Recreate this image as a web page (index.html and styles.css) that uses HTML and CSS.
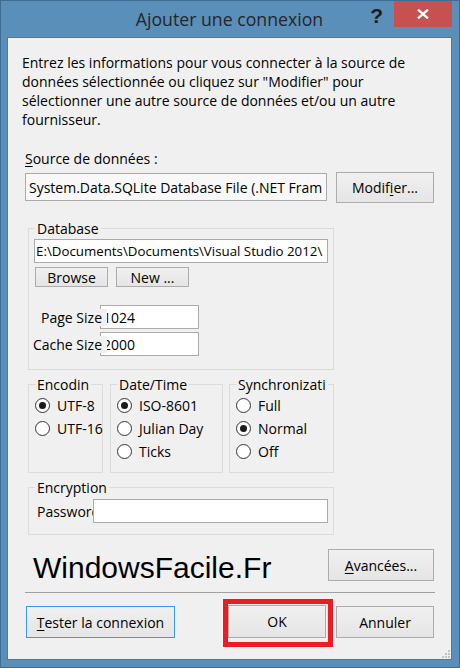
FILE: index.html
```html
<!DOCTYPE html>
<html lang="fr">
<head>
<meta charset="utf-8">
<title>Ajouter une connexion</title>
<link rel="stylesheet" href="styles.css">
</head>
<body>
<div class="window">
  <div class="titlebar">
    <div class="title">Ajouter une connexion</div>
    <div class="caption-buttons">
      <span class="help">?</span>
      <span class="close"><svg width="12" height="10" viewBox="0 0 12 10"><path d="M1 0.6 L11 9.4 M11 0.6 L1 9.4" stroke="#fff" stroke-width="2.3" fill="none"/></svg></span>
    </div>
  </div>
  <div class="client">
    <p class="intro">Entrez les informations pour vous connecter à la source de<br>données sélectionnée ou cliquez sur "Modifier" pour<br>sélectionner une autre source de données et/ou un autre<br>fournisseur.</p>
    <div class="source-label"><u>S</u>ource de données :</div>
    <div class="source-row">
      <div class="textbox readonly source-box">System.Data.SQLite Database File (.NET Fram</div>
      <div class="button modify">Modif<u>i</u>er...</div>
    </div>

    <fieldset class="group db">
      <legend>Database</legend>
      <div class="textbox path">E:\Documents\Documents\Visual Studio 2012\</div>
      <div class="db-buttons">
        <div class="button small">Browse</div>
        <div class="button small">New ...</div>
      </div>
      <div class="kv page"><span class="kv-label">Page Size</span><div class="textbox kv-box">1024</div></div>
      <div class="kv cache"><span class="kv-label">Cache Size</span><div class="textbox kv-box">2000</div></div>
    </fieldset>

    <div class="groups">
      <fieldset class="group enc">
        <legend>Encodin</legend>
        <div class="radio-row"><span class="radio checked"></span><span>UTF-8</span></div>
        <div class="radio-row"><span class="radio"></span><span>UTF-16</span></div>
      </fieldset>
      <fieldset class="group dt">
        <legend>Date/Time</legend>
        <div class="radio-row"><span class="radio checked"></span><span>ISO-8601</span></div>
        <div class="radio-row"><span class="radio"></span><span>Julian Day</span></div>
        <div class="radio-row"><span class="radio"></span><span>Ticks</span></div>
      </fieldset>
      <fieldset class="group sync">
        <legend>Synchronizati</legend>
        <div class="radio-row"><span class="radio"></span><span>Full</span></div>
        <div class="radio-row"><span class="radio checked"></span><span>Normal</span></div>
        <div class="radio-row"><span class="radio"></span><span>Off</span></div>
      </fieldset>
    </div>

    <fieldset class="group crypt">
      <legend>Encryption</legend>
      <div class="pw-row"><span class="pw-label">Password</span><div class="textbox pw-box"></div></div>
    </fieldset>

    <div class="brand-row">
      <div class="brand">WindowsFacile.Fr</div>
      <div class="button advanced"><u>A</u>vancées...</div>
    </div>

    <div class="separator"></div>

    <div class="bottom-row">
      <div class="button test"><u>T</u>ester la connexion</div>
      <div class="highlight"><div class="button ok">OK</div></div>
      <div class="button cancel">Annuler</div>
    </div>

    <div class="grip">
      <svg width="10" height="9" viewBox="0 0 10 9">
        <rect x="7" y="0" width="2" height="2" fill="#c4c4c4"/>
        <rect x="4" y="3" width="2" height="2" fill="#c4c4c4"/>
        <rect x="7" y="3" width="2" height="2" fill="#c4c4c4"/>
        <rect x="1" y="6" width="2" height="2" fill="#c4c4c4"/>
        <rect x="4" y="6" width="2" height="2" fill="#c4c4c4"/>
        <rect x="7" y="6" width="2" height="2" fill="#c4c4c4"/>
      </svg>
    </div>
  </div>
</div>
</body>
</html>
```

FILE: styles.css
```css
html, body {
  margin: 0;
  padding: 0;
}

body {
  font-family: "Open Sans", "Noto Sans", sans-serif;
  font-size: 14px;
  line-height: 19px;
  color: #000;
  background: #5a8fba;
}

.window {
  box-sizing: border-box;
  width: 460px;
  height: 668px;
  border: 1px solid #3f6c91;
  background: #5a8fba;
  padding: 0 7px 7px 6px;
  display: flex;
  flex-direction: column;
}

/* ---------- title bar ---------- */
.titlebar {
  height: 36px;
  flex: none;
  display: grid;
  grid-template-columns: 1fr auto 1fr;
  align-items: start;
}

.title {
  grid-column: 2;
  margin-top: 6px;
  font-size: 17.7px;
  line-height: 24px;
  color: #262626;
  white-space: nowrap;
}

.caption-buttons {
  grid-column: 3;
  display: flex;
  justify-content: flex-end;
  align-items: flex-start;
}

.help {
  font-family: "Liberation Sans", Arial, sans-serif;
  font-weight: bold;
  font-size: 21px;
  line-height: 21px;
  margin-top: 4px;
  color: #1c1c1c;
}

.close {
  margin-left: 11px;
  width: 58px;
  height: 26px;
  margin-top: 0;
  background: #c75050;
  display: flex;
  align-items: center;
  justify-content: center;
}

/* ---------- client area ---------- */
.client {
  flex: 1;
  border: 1px solid #4a7aa2;
  background: #f0f0f0;
  display: flex;
  flex-direction: column;
  align-items: flex-start;
}

.intro {
  margin: 15px 0 0 14px;
  white-space: nowrap;
}

.source-label {
  margin: 20px 0 0 17px;
}

u {
  text-decoration: underline;
  text-underline-offset: 2px;
}

.source-row {
  margin: 4px 0 0 17px;
  display: flex;
  align-items: flex-start;
}

.textbox {
  box-sizing: border-box;
  border: 1px solid #ababab;
  background: #fff;
  white-space: nowrap;
  overflow: hidden;
  display: flex;
  align-items: center;
}

.readonly {
  background: #f8f8f8;
}

.source-box {
  width: 302px;
  height: 28px;
  margin-top: 1px;
  padding-left: 3px;
}

.button {
  box-sizing: border-box;
  border: 1px solid #acacac;
  background: linear-gradient(#f0f0f0, #e5e5e5);
  display: flex;
  align-items: center;
  justify-content: center;
  white-space: nowrap;
}

.modify {
  width: 98px;
  height: 31px;
  margin-left: 9px;
}

/* ---------- group boxes ---------- */
.group {
  box-sizing: border-box;
  margin: 0;
  padding: 0;
  border: 1px solid #dcdcdc;
  min-width: 0;
}

.group legend {
  padding: 0 2px;
  margin-left: 6px;
  line-height: 19px;
  white-space: nowrap;
}

.db {
  width: 306px;
  margin: 16px 0 0 20px;
  padding-bottom: 13px;
}

.path {
  width: 294px;
  height: 24px;
  margin: 1px 0 0 5px;
  padding-left: 1px;
  font-size: 13.3px;
}

.db-buttons {
  display: flex;
  gap: 8px;
  margin: 4px 0 0 6px;
}

.small {
  width: 73px;
  height: 20px;
}

.kv {
  display: flex;
  align-items: center;
}

.page {
  margin-top: 18px;
}

.cache {
  margin-top: 3px;
}

.kv-label {
  box-sizing: border-box;
  width: 78px;
  line-height: 17px;
  padding-right: 5px;
  text-align: right;
  white-space: nowrap;
  background: #f0f0f0;
  margin-right: -7px;
  z-index: 1;
}

.kv-box {
  width: 99px;
  height: 24px;
  padding-left: 2px;
}

.groups {
  display: flex;
  margin: 5px 0 0 20px;
  align-items: stretch;
}

.groups .group {
  padding-bottom: 9px;
}

.enc {
  width: 75px;
}

.dt {
  width: 113px;
  margin-left: 7px;
}

.sync {
  width: 105px;
  margin-left: 6px;
}

.radio-row {
  height: 23px;
  display: flex;
  align-items: center;
  padding-left: 6px;
  gap: 7px;
  white-space: nowrap;
}

.radio {
  box-sizing: border-box;
  flex: none;
  width: 15px;
  height: 15px;
  border: 1px solid #333;
  border-radius: 50%;
  background: #fff;
  display: flex;
  align-items: center;
  justify-content: center;
}

.radio.checked::after {
  content: "";
  width: 7px;
  height: 7px;
  border-radius: 50%;
  background: #1a1a1a;
}

.crypt {
  width: 306px;
  margin: 5px 0 0 20px;
  padding-bottom: 11px;
}

.pw-row {
  display: flex;
  align-items: center;
  margin: 2px 0 0 8px;
}

.pw-label {
  width: 56px;
  white-space: nowrap;
}

.pw-box {
  width: 235px;
  height: 24px;
}

/* ---------- brand + buttons ---------- */
.brand-row {
  align-self: stretch;
  display: flex;
  justify-content: space-between;
  align-items: flex-start;
  margin: 14px 17px 0 25px;
}

.brand {
  font-family: "Liberation Sans", Arial, sans-serif;
  font-size: 30px;
  line-height: 32px;
  margin-top: 3px;
  margin-bottom: -3px;
  color: #000;
}

.advanced {
  width: 106px;
  height: 32px;
}

.separator {
  align-self: stretch;
  height: 1px;
  background: #a0a0a0;
  margin: 11px 16px 0 17px;
}

.bottom-row {
  align-self: stretch;
  display: flex;
  align-items: flex-start;
  margin: 6px 17px 0 18px;
}

.test {
  width: 149px;
  height: 32px;
  margin-top: 7px;
  border-color: #3399ff;
  margin-right: auto;
}

.highlight {
  border: 5px solid #ed1c24;
  padding: 1px 2px 4px 0;
}

.ok {
  width: 98px;
  height: 33px;
}

.cancel {
  width: 98px;
  height: 32px;
  margin-top: 7px;
  margin-left: 3px;
}

.grip {
  margin-top: auto;
  align-self: flex-end;
  display: flex;
}

.grip svg {
  display: block;
}
```
